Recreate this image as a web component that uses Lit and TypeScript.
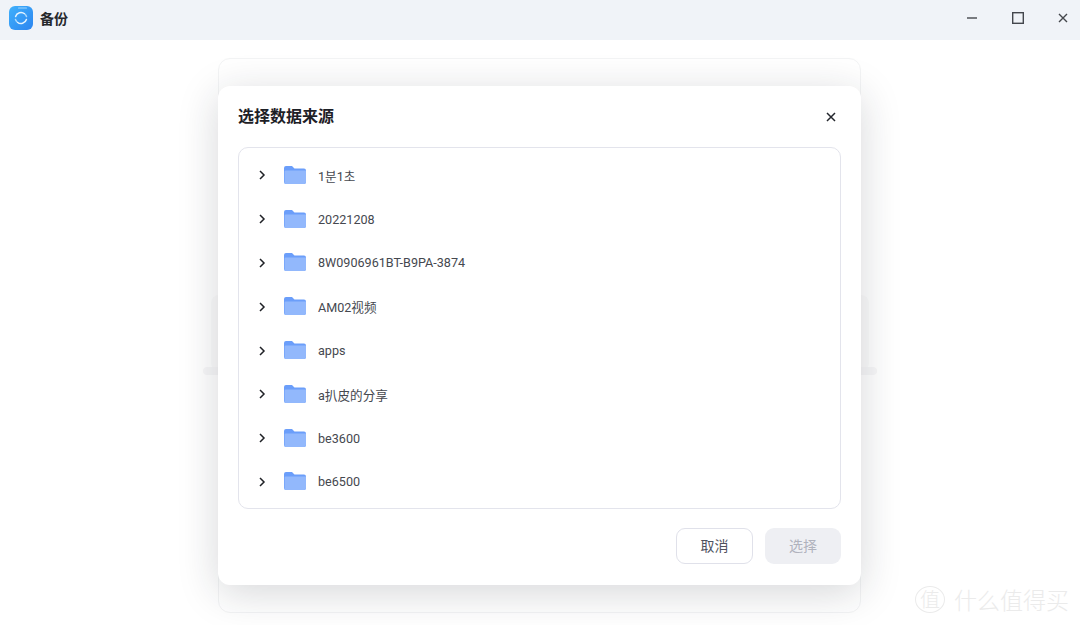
import { LitElement, html, css } from "lit";
import { customElement } from "lit/decorators.js";

const FOLDERS = ["1분1초", "20221208", "8W0906961BT-B9PA-3874", "AM02视频", "apps", "a扒皮的分享", "be3600", "be6500"];

@customElement("app-root")
export class AppRoot extends LitElement {
  static styles = css`
    :host {
      display: flex;
      flex-direction: column;
      width: 1080px;
      height: 625px;
      overflow: hidden;
      position: relative;
      background: #fff;
      font-family: "Roboto", "Noto Sans CJK SC", "Noto Sans CJK KR", sans-serif;
    }
    .titlebar {
      height: 40px;
      flex: none;
      box-sizing: border-box;
      background: #f0f3f8;
      display: flex;
      align-items: center;
      padding: 0 0 4px 9px;
      gap: 7px;
    }
    .logo { width: 24px; height: 24px; display: block; }
    .app-name { font-size: 14px; font-weight: 700; color: #26282c; flex: 1; }
    .win {
      display: flex;
      align-items: center;
      padding-right: 8px;
      gap: 27.5px;
    }
    .win svg { display: block; width: 18px; height: 18px; }
    .content {
      flex: 1;
      position: relative;
      background: #fff;
    }
    .back-card {
      position: absolute;
      left: 218px;
      top: 18px;
      width: 643px;
      height: 555px;
      box-sizing: border-box;
      border: 1px solid #f3f4f5;
      border-radius: 12px;
      background: #fff;
    }
    .back-band {
      position: absolute;
      left: 203px;
      top: 327px;
      width: 674px;
      height: 8px;
      background: #f7f7f8;
      border-radius: 4px;
    }
    .back-block {
      position: absolute;
      left: 211px;
      top: 255px;
      width: 658px;
      height: 76px;
      background: #fbfbfb;
      border-radius: 8px;
    }
    .modal {
      position: absolute;
      left: 218px;
      top: 46px;
      width: 643px;
      height: 499px;
      box-sizing: border-box;
      background: #fff;
      border-radius: 12px;
      box-shadow: 0 8px 40px rgba(30, 35, 45, 0.18);
      padding: 0 20px 20px;
      display: flex;
      flex-direction: column;
    }
    .modal-head {
      height: 61px;
      flex: none;
      box-sizing: border-box;
      display: flex;
      align-items: center;
      justify-content: space-between;
      padding-bottom: 4px;
    }
    .modal-title { font-size: 16px; font-weight: 700; color: #1d2026; }
    .close { display: block; width: 12px; height: 12px; margin-right: 4px; margin-top: 4px; }
    .list {
      height: 362px;
      flex: none;
      box-sizing: border-box;
      border: 1px solid #e3e4ec;
      border-radius: 10px;
      padding: 5.5px 0 5px;
      display: flex;
      flex-direction: column;
    }
    .row {
      height: 43.8px;
      flex: none;
      display: flex;
      align-items: center;
      padding-left: 18px;
    }
    .chev { width: 10px; height: 10px; display: block; margin-right: 16px; }
    .folder { width: 24px; height: 20px; display: block; margin: 0 11px 1px 0; }
    .name { font-size: 12.6px; color: #45484f; }
    .actions {
      flex: 1;
      display: flex;
      justify-content: flex-end;
      align-items: flex-start;
      gap: 12px;
      padding-top: 19px;
    }
    .btn {
      width: 77px;
      height: 36px;
      box-sizing: border-box;
      border-radius: 9px;
      font: inherit;
      font-size: 14px;
      display: flex;
      align-items: center;
      justify-content: center;
      padding: 0 0 2px;
    }
    .cancel { background: #fff; border: 1px solid #e0e1ea; color: #50535f; }
    .choose { background: #eeeff3; border: none; color: #b0b2bd; width: 76px; }
    .watermark {
      position: absolute;
      right: 11px;
      bottom: 12px;
      display: flex;
      align-items: center;
      gap: 9px;
      color: #ebebeb;
      font-size: 23px;
      font-family: "Noto Sans CJK SC", sans-serif;
      font-weight: 300;
      line-height: 28px;
    }
    .wm-mark {
      width: 30px;
      height: 27px;
      box-sizing: border-box;
      border: 1.5px solid #ebebeb;
      border-radius: 50%;
      font-size: 20px;
      line-height: 24px;
      text-align: center;
    }
  `;

  private folderIcon() {
    return html`<svg class="folder" viewBox="0 0 24 20">
      <path d="M1 3a2 2 0 0 1 2-2h6l2.5 2.5H21a2 2 0 0 1 2 2V17a2 2 0 0 1-2 2H3a2 2 0 0 1-2-2z" fill="#6b9efa" />
      <path d="M1.6 6.5a1 1 0 0 1 1-1H23V17a2 2 0 0 1-2 2H3a1.4 1.4 0 0 1-1.4-2z" fill="#92b8fc" />
    </svg>`;
  }

  render() {
    return html`
      <div class="titlebar">
        <svg class="logo" viewBox="0 0 24 24">
          <defs>
            <linearGradient id="lg" x1="0" y1="0" x2="1" y2="1">
              <stop offset="0" stop-color="#3fb0fb" />
              <stop offset="1" stop-color="#2c85f0" />
            </linearGradient>
          </defs>
          <rect width="24" height="24" rx="6" fill="url(#lg)" />
          <rect x="9" y="1.5" width="9" height="1" rx="0.5" fill="#9fd6fd" />
          <path d="M6.6 10.5a5.6 5.6 0 0 1 9-2.7" fill="none" stroke="#e4f3ff" stroke-width="1.5" stroke-linecap="round" />
          <path d="M17.4 13.5a5.6 5.6 0 0 1-9 2.7" fill="none" stroke="#e4f3ff" stroke-width="1.5" stroke-linecap="round" />
          <path d="M17.5 10.5a5.6 5.6 0 0 0-1-1.8M6.5 13.5a5.6 5.6 0 0 0 1 1.8" fill="none" stroke="#a9d8fd" stroke-width="1.5" stroke-linecap="round" />
        </svg>
        <span class="app-name">备份</span>
        <div class="win">
          <svg viewBox="0 0 18 18"><path d="M4 9h10" stroke="#44474d" stroke-width="1.4" fill="none" /></svg>
          <svg viewBox="0 0 18 18"><rect x="3.7" y="3.7" width="10.6" height="10.6" fill="none" stroke="#44474d" stroke-width="1.4" /></svg>
          <svg viewBox="0 0 18 18"><path d="M5 5l8 8M13 5l-8 8" stroke="#44474d" stroke-width="1.4" fill="none" /></svg>
        </div>
      </div>
      <div class="content">
        <div class="back-block"></div>
        <div class="back-band"></div>
        <div class="back-card"></div>
        <div class="modal">
          <div class="modal-head">
            <span class="modal-title">选择数据来源</span>
            <svg class="close" viewBox="0 0 12 12"><path d="M2 2l8 8M10 2l-8 8" stroke="#23262c" stroke-width="1.5" fill="none" /></svg>
          </div>
          <div class="list">
            ${FOLDERS.map(
              (f) => html`<div class="row">
                <svg class="chev" viewBox="0 0 10 10"><path d="M3 1l4 4-4 4" stroke="#1f2126" stroke-width="1.5" fill="none" /></svg>
                ${this.folderIcon()}
                <span class="name">${f}</span>
              </div>`
            )}
          </div>
          <div class="actions">
            <button class="btn cancel">取消</button>
            <button class="btn choose">选择</button>
          </div>
        </div>
        <div class="watermark"><span class="wm-mark">值</span><span>什么值得买</span></div>
      </div>
    `;
  }
}
